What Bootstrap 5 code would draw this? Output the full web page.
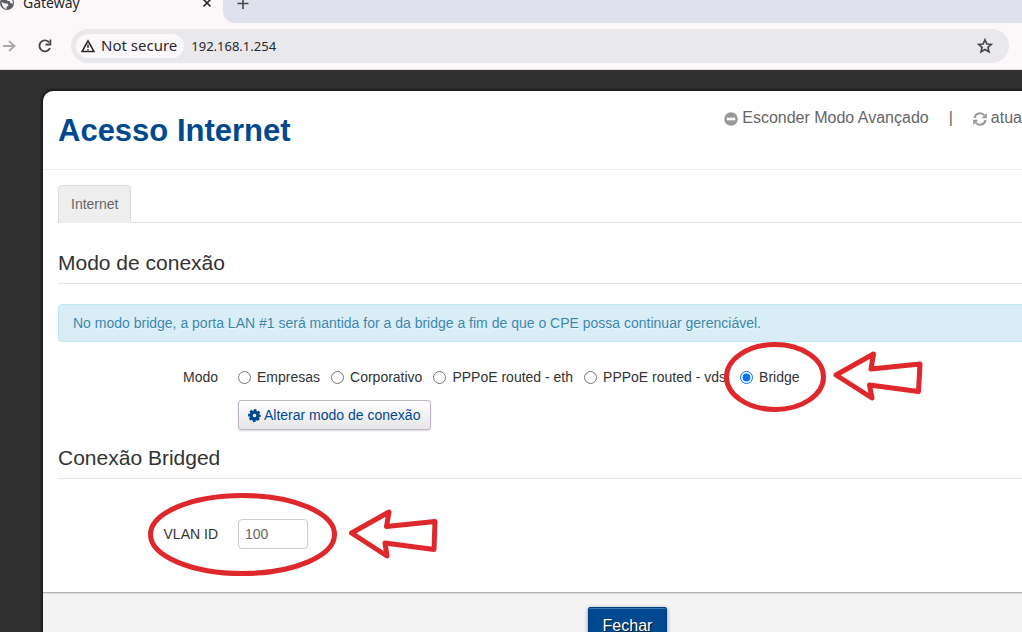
<!DOCTYPE html>
<html lang="pt">
<head>
<meta charset="utf-8">
<meta name="viewport" content="width=device-width, initial-scale=1">
<title>Gateway</title>
<link href="https://cdn.jsdelivr.net/npm/bootstrap@5.3.0/dist/css/bootstrap.min.css" rel="stylesheet">
<style>
:root { --overhang: 190px; --red: #de282b; --brand: #004990; }
body { background: #303030; color: #333; font: 14px/20px "Liberation Sans", Arial, sans-serif; height: 100vh; overflow: hidden; }
svg { display: block; flex: none; }
.chrome { background: #fcf8fa; font-family: "Noto Sans", sans-serif; color: #28292c; border-bottom: 1px solid #dfdcdf; }
.tabstrip { height: 23px; background: #fcf8fa; overflow: hidden; }
.tab-current { width: 223px; line-height: 40px; padding-right: 11px; }
.tab-rest { background: #dfe2ec; border-bottom-left-radius: 12px; line-height: 40px; padding-left: 14px; }
.plain-btn { border: 0; background: none; padding: 0; color: inherit; }
.toolbar { height: 46px; padding-right: 13px; }
.btn-reload { margin: 0 18px 0 21px; }
.omnibox { background: #e9e8ed; height: 34px; border-radius: 17px; padding: 0 16px 0 5px; }
.chip { background: #fcf8fa; height: 24px; border-radius: 12px; padding: 0 7px 0 5px; font-size: 15px; line-height: 22px; gap: 6px; }
.chip span { padding-bottom: 2px; }
.address { border: 0; background: none; outline: 0; font-size: 13px; padding: 0; margin-left: 7px; color: #28292c; min-width: 0; }
.panel { margin: 21px calc(-1 * var(--overhang)) 0 43px; background: #fff; border-radius: 10px 10px 0 0; box-shadow: 0 0 3px 1px #111; }
.panel-top { height: 79px; padding: 18px var(--overhang) 0 15px; border-bottom: 1px solid #eee; }
.panel-top h1 { font-size: 31px; line-height: 44px; font-weight: 700; color: var(--brand); margin: 0; }
.top-links { font-size: 16px; line-height: 18px; color: #666; white-space: nowrap; }
.top-links a { color: #666; text-decoration: none; gap: 4px; }
.top-links svg { margin-top: 2px; }
.panel-main { padding: 15px 15px 43px; }
.nav-tabs { border-color: #ddd; }
.nav-tabs .nav-link.active { background: #eee; border-color: #ddd #ddd #eee; color: #666; padding: 8px 12px; border-radius: 4px 4px 0 0; }
.section-title { font-size: 21px; line-height: 40px; font-weight: 400; border-bottom: 1px solid #e5e5e5; margin: 0; color: #333; }
.notice { background: #d9edf7; border: 1px solid #bce8f1; color: #3a87ad; border-radius: 4px; padding: 8px 14px; margin: 20px 0 25px; text-shadow: 0 1px 0 rgba(255,255,255,.5); }
.field-name { width: 160px; text-align: right; margin-right: 20px; flex: none; }
.modes { gap: 11px; white-space: nowrap; }
.mode { gap: 6px; }
.mode input { width: 13px; height: 13px; margin: 0; }
.btn-mode { font-size: 14px; line-height: 20px; padding: 4px 10px 4px 9px; border: 1px solid #c0b3c6; border-radius: 3px; color: var(--brand); background: linear-gradient(#fff, #e6e6e6); box-shadow: 0 1px 2px rgba(0,0,0,.15); gap: 3px; margin: 13px 0 8px 180px; }
.vlan-row { margin-top: 40px; }
.vlan-input { width: 70px; height: 30px; border: 1px solid #ccc; border-radius: 4px; padding: 4px 6px; font-size: 14px; line-height: 20px; color: #666; }
.callout { position: absolute; pointer-events: none; fill: none; stroke: var(--red); stroke-width: 5; stroke-linejoin: round; z-index: 2; }
.callout-bridge { left: -16px; top: -25px; }
.callout-vlan { left: 90px; top: -26px; }
.panel-foot { background: #f4f4f4; border-top: 1px solid #b5b5b5; box-shadow: inset 0 1px 0 #ddd; padding: 14px; text-align: center; }
.btn-close-panel { background: var(--brand); color: #fff; border: 1px solid #003f80; border-radius: 2px; font-size: 16px; line-height: 20px; padding: 8px 14px; box-shadow: inset 0 1px 0 #3b78b3, 0 1px 4px rgba(0,0,0,.4); text-shadow: 1px 1px 1px #111; }
</style>
</head>
<body>
<header class="chrome">
  <div class="tabstrip d-flex align-items-end">
    <div class="tab-current d-flex align-items-center">
      <svg width="15" height="40" viewBox="0 0 15 40"><circle cx="7" cy="20" r="7" fill="#5b5f65"/><path d="M1.500 19l3.500 1.500 2.500 0 1 2-2 1.500v2.200Q2 25 1.500 19zM8 14.500l-1.500 2 1 1.500h2l1 2 2.200.8Q13.500 16 8 14.500z" fill="#fcf8fa"/></svg>
      <span class="flex-fill ps-2">Gateway</span>
      <button class="plain-btn" aria-label="Close tab"><svg width="10" height="40" viewBox="0 0 10 40"><path d="M1.500 16.500l7 7M8.500 16.500l-7 7" stroke="#28292c" stroke-width="1.700"/></svg></button>
    </div>
    <div class="tab-rest flex-fill">
      <button class="plain-btn d-block" aria-label="New tab"><svg width="12" height="40" viewBox="0 0 12 40"><path d="M6 15v11M.500 20.500h11" stroke="#44474c" stroke-width="1.600"/></svg></button>
    </div>
  </div>
  <div class="toolbar d-flex align-items-center">
    <button class="plain-btn" aria-label="Forward"><svg width="16" height="16" viewBox="0 0 16 16"><path d="M3 8h11M9 3l5.500 5L9 13" fill="none" stroke="#aaa8ab" stroke-width="1.800"/></svg></button>
    <button class="plain-btn btn-reload" aria-label="Reload"><svg width="16" height="16" viewBox="0 0 16 16"><path d="M13 10A5.500 5.500 0 1 1 12.300 4.500" fill="none" stroke="#44474c" stroke-width="1.900"/><path d="M14.300 1.600v5.800H8.500V5.600h4V1.600z" fill="#44474c"/></svg></button>
    <div class="omnibox d-flex align-items-center flex-fill">
      <div class="chip d-flex align-items-center">
        <svg width="14" height="14" viewBox="0 0 14 14"><path d="M7 1.800L1 12.500h12z" fill="none" stroke="#28292c" stroke-width="1.600"/><path d="M7 5.500v3.500M7 10v1.500" stroke="#28292c" stroke-width="1.400"/></svg>
        <span>Not secure</span>
      </div>
      <input class="address flex-fill" aria-label="Address" value="192.168.1.254">
      <button class="plain-btn" aria-label="Bookmark"><svg width="16" height="16" viewBox="0 0 16 16"><path d="M8 1.800l1.900 4.200 4.500.4-3.400 3 1 4.400L8 11.500l-4 2.300 1-4.400-3.400-3 4.500-.4z" fill="none" stroke="#44474c" stroke-width="1.700"/></svg></button>
    </div>
  </div>
</header>
<main class="panel">
  <div class="panel-top d-flex justify-content-between">
    <h1>Acesso Internet</h1>
    <div class="top-links d-flex align-items-start">
      <a href="#" class="d-flex align-items-center"><svg width="14" height="14" viewBox="0 0 14 14"><circle cx="7" cy="7" r="6.800" fill="#999"/><path d="M2.800 7h8.400" stroke="#fff" stroke-width="2.600"/></svg>Esconder Modo Avançado</a>
      <span class="mx-3 px-1">|</span>
      <a href="#" class="d-flex align-items-center"><svg width="14" height="14" viewBox="0 0 14 14"><path d="M1.500 6A5.600 5.600 0 0 1 11.500 3.500M12.500 8A5.600 5.600 0 0 1 2.500 10.500" fill="none" stroke="#999" stroke-width="2"/><path d="M13.800 1v5.200H8.600zM.2 13V7.800h5.200z" fill="#999"/></svg>atua</a>
    </div>
  </div>
  <div class="panel-main">
    <ul class="nav nav-tabs"><li class="nav-item"><a class="nav-link active" href="#">Internet</a></li></ul>
    <h2 class="section-title mt-3 pt-1">Modo de conexão</h2>
    <div class="notice">No modo bridge, a porta LAN #1 será mantida for a da bridge a fim de que o CPE possa continuar gerenciável.</div>
    <div class="d-flex" role="radiogroup" aria-labelledby="modo">
      <span class="field-name" id="modo">Modo</span>
      <div class="modes d-flex">
        <label class="mode d-flex align-items-center"><input type="radio" name="modo">Empresas</label>
        <label class="mode d-flex align-items-center"><input type="radio" name="modo">Corporativo</label>
        <label class="mode d-flex align-items-center"><input type="radio" name="modo">PPPoE routed - eth</label>
        <label class="mode d-flex align-items-center"><input type="radio" name="modo">PPPoE routed - vdsl</label>
        <div class="position-relative">
          <label class="mode d-flex align-items-center"><input type="radio" name="modo" checked>Bridge</label>
          <svg class="callout callout-bridge" width="202" height="70" viewBox="0 0 202 70"><ellipse cx="51" cy="35" rx="48.500" ry="32.500"/><path d="M112 33L149.500 12 147 27 196 22 194.500 49.500 145.500 43 148 56z"/></svg>
        </div>
      </div>
    </div>
    <button class="btn-mode d-flex align-items-center" type="button">
      <svg width="13" height="13" viewBox="0 0 13 13"><circle cx="6.500" cy="6.500" r="3.500" fill="none" stroke="#004990" stroke-width="3.400"/><circle cx="6.500" cy="6.500" r="5.300" fill="none" stroke="#004990" stroke-width="2.200" stroke-dasharray="2.500 1.660" stroke-dashoffset="1.250"/></svg>Alterar modo de conexão</button>
    <h2 class="section-title">Conexão Bridged</h2>
    <div class="vlan-row d-flex align-items-center position-relative">
      <label class="field-name" for="vlan">VLAN ID</label>
      <input class="vlan-input" id="vlan" type="text" value="100">
      <svg class="callout callout-vlan" width="292" height="83" viewBox="0 0 292 83"><ellipse cx="94.500" cy="41.500" rx="92" ry="39"/><path d="M203.500 40L241 19 238.500 33.500 287 28.500 286 56.500 237 50 239 63z"/></svg>
    </div>
  </div>
  <div class="panel-foot"><button class="btn-close-panel" type="button">Fechar</button></div>
</main>
<script src="https://cdn.jsdelivr.net/npm/bootstrap@5.3.0/dist/js/bootstrap.bundle.min.js"></script>
</body>
</html>
